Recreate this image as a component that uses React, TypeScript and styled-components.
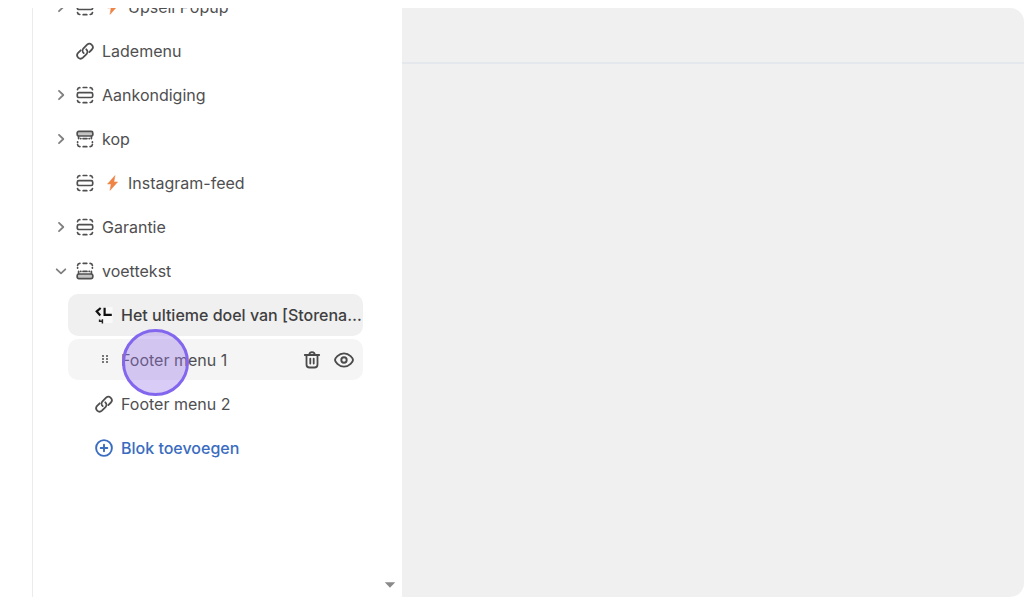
import React from 'react';
import styled, { createGlobalStyle } from 'styled-components';

const GlobalStyle = createGlobalStyle`
  * { box-sizing: border-box; }
  body {
    margin: 0;
    background: #fff;
    color: #4f4f51;
    font-family: Inter, "Liberation Sans", sans-serif;
  }
`;

const Editor = styled.div`
  display: flex;
  height: calc(100vh - 11px);
  margin: 8px 0 3px 32px;
  overflow: hidden;
  border-left: 1px solid #ebebeb;
  border-radius: 0 14px 14px 0;
`;

const Sidebar = styled.nav`
  display: flex;
  flex: 0 0 369px;
  min-width: 0;
  background: #fff;
`;

const SectionList = styled.ul`
  display: flex;
  flex: 1;
  flex-direction: column;
  gap: 3px;
  min-width: 0;
  margin: -22px 0 0;
  padding: 0 15px 0 16px;
  list-style: none;
`;

const BlockList = styled.ul`
  display: flex;
  flex-direction: column;
  gap: 3px;
  margin: 3px 0 0 19px;
  padding: 0;
  list-style: none;
`;

type Tone = 'plain' | 'selected' | 'hovered';
const fills: Record<Tone, string> = { plain: 'transparent', selected: '#f0f0f0', hovered: '#f5f5f5' };

const Row = styled.div<{ $tone?: Tone; $nested?: boolean }>`
  position: relative;
  display: flex;
  align-items: center;
  height: ${p => (p.$tone === 'selected' ? 42 : 41)}px;
  padding-left: ${p => (p.$nested ? 24 : 0)}px;
  border-radius: 10px;
  background: ${p => fills[p.$tone ?? 'plain']};
`;

const IconButton = styled.button`
  display: grid;
  flex: none;
  place-items: center;
  width: 24px;
  height: 24px;
  padding: 0;
  border: 0;
  background: none;
  color: #808080;
  cursor: pointer;
`;

const ToggleSpace = styled.span`
  flex: 0 0 24px;
`;

const RowButton = styled.button<{ $tone?: 'link' | 'strong' }>`
  display: flex;
  flex: 1;
  align-items: center;
  gap: 5px;
  min-width: 0;
  height: 40px;
  padding: 0;
  border: 0;
  background: none;
  color: ${p => (p.$tone === 'link' ? '#3a6cc0' : p.$tone === 'strong' ? '#3f3f41' : 'inherit')};
  font: 400 16px/24px Inter, "Liberation Sans", sans-serif;
  font-weight: ${p => (p.$tone ? 500 : 400)};
  text-align: left;
  cursor: pointer;
`;

const IconSlot = styled.span<{ $narrow?: boolean }>`
  display: grid;
  flex: 0 0 ${p => (p.$narrow ? 21 : 24)}px;
  place-items: center;
`;

const Label = styled.span`
  overflow: hidden;
  text-overflow: ellipsis;
  white-space: nowrap;
`;

const Actions = styled.div`
  display: flex;
  gap: 8px;
  padding-right: 7px;

  ${IconButton} {
    color: #4a4a4a;
  }
`;

const ClickMarker = styled.span`
  position: absolute;
  top: -10px;
  left: 54px;
  width: 67px;
  height: 67px;
  border: 3px solid #8366ee;
  border-radius: 50%;
  background: rgba(151, 113, 231, 0.36);
  pointer-events: none;
`;

const ScrollTrack = styled.div`
  display: flex;
  flex: 0 0 24px;
  align-items: flex-end;
  justify-content: center;
`;

const Preview = styled.main`
  flex: 1;
  min-width: 0;
  background: #f0f0f0;
`;

const PreviewBar = styled.header`
  height: 56px;
  border-bottom: 2px solid #e4e7eb;
`;

const Svg = styled.svg`
  display: block;
  fill: none;
  stroke: currentColor;
  stroke-linecap: round;
  stroke-linejoin: round;
`;

const SectionIcon = () => (
  <Svg width="20" height="20" viewBox="0 0 20 20" strokeWidth="1.7" aria-hidden="true">
    <rect x="2.3" y="7.7" width="15.4" height="4.8" rx="1.6" />
    <path d="M2.5 4.7c.2-1.2 1-1.9 2.3-2M8.2 2.5h3.6M15.2 2.7c1.3.1 2.1.8 2.3 2M2.5 15.5c.2 1.2 1 1.9 2.3 2M8.2 17.7h3.6M15.2 17.5c1.3-.1 2.1-.8 2.3-2" />
  </Svg>
);

const HeaderIcon = () => (
  <Svg width="20" height="20" viewBox="0 0 20 20" strokeWidth="1.7" aria-hidden="true">
    <rect x="2.2" y="2.4" width="15.6" height="4.6" rx="1.6" fill="#c4c4c4" />
    <path d="M3.6 7.6v2M16.4 7.6v2M8 9.6h4M5.6 9.6h.3M14.1 9.6h.3M2.6 12.9v.5M17.4 12.9v.5M2.6 15.6c.2 1.2 1 1.9 2.3 2M8.2 17.7h3.6M15.1 17.6c1.3-.1 2.1-.8 2.3-2" />
  </Svg>
);

const FooterIcon = () => (
  <Svg width="20" height="20" viewBox="0 0 20 20" strokeWidth="1.7" aria-hidden="true">
    <rect x="2.2" y="13" width="15.6" height="4.6" rx="1.6" fill="#c4c4c4" />
    <path d="M3.6 12.4v-2M16.4 12.4v-2M8 10.4h4M5.6 10.4h.3M14.1 10.4h.3M2.6 7.1v-.5M17.4 7.1v-.5M2.6 4.4c.2-1.2 1-1.9 2.3-2M8.2 2.3h3.6M15.1 2.4c1.3.1 2.1.8 2.3 2" />
  </Svg>
);

const LinkIcon = () => (
  <Svg width="20" height="20" viewBox="0 0 20 20" strokeWidth="1.8" aria-hidden="true">
    <path d="M8.7 12.1a3.4 3.4 0 0 1-.2-4.8l3.6-3.6a3.4 3.4 0 0 1 4.8 4.8l-2.6 2.6" />
    <path d="M11.3 8.3a3.4 3.4 0 0 1 .2 4.8l-3.6 3.6a3.4 3.4 0 0 1-4.8-4.8l2.6-2.6" />
  </Svg>
);

const ChevronIcon = ({ open }: { open?: boolean }) => (
  <Svg width="14" height="14" viewBox="0 0 14 14" strokeWidth="1.8" aria-hidden="true">
    <path d={open ? 'M2.7 5.3 7 9.3 11.3 5.3' : 'M5 2.8 9.3 7 5 11.2'} />
  </Svg>
);

const BoltIcon = () => (
  <svg width="11" height="16" viewBox="0 0 11 16" aria-hidden="true">
    <path d="M8 .6.5 9h3.6L3 15.4 10.6 6.9H6.9z" fill="#ee8546" stroke="#ee8546" strokeWidth=".5" />
  </svg>
);

const BrandIcon = () => (
  <svg width="20" height="20" viewBox="0 0 20 20" aria-hidden="true">
    <path d="M10 2h8.5v16H7v-5z" fill="#f9f9f9" />
    <path d="M6.7 3 2.7 6.4l3.6 4M10.6 2.8v7h7.2" fill="none" stroke="#111" strokeWidth="2.2" />
    <path d="M5.6 14.4v1.8h2.8M8.4 14.2v4.3" fill="none" stroke="#222" strokeWidth="1.5" />
  </svg>
);

const GripIcon = () => (
  <svg width="8" height="12" viewBox="0 0 8 12" fill="#777" aria-hidden="true">
    {[1, 4, 7].map(y => (
      <React.Fragment key={y}>
        <rect x="2" y={y} width="2" height="2" />
        <rect x="6" y={y} width="2" height="2" />
      </React.Fragment>
    ))}
  </svg>
);

const AddIcon = () => (
  <Svg width="20" height="20" viewBox="0 0 20 20" strokeWidth="1.9" aria-hidden="true">
    <circle cx="10" cy="10" r="7.9" />
    <path d="M10 6.7v6.6M6.7 10h6.6" />
  </Svg>
);

const TrashIcon = () => (
  <Svg width="20" height="20" viewBox="0 0 20 20" strokeWidth="1.8" aria-hidden="true">
    <path d="M2.8 5h14.4M7.3 4.8c0-3.6 5.4-3.6 5.4 0M4.5 5.3v9.2c0 2 1 3 3 3h5c2 0 3-1 3-3V5.3M8.3 8.6v5M11.7 8.6v5" />
  </Svg>
);

const EyeIcon = () => (
  <Svg width="22" height="20" viewBox="0 0 22 20" strokeWidth="1.9" aria-hidden="true">
    <path d="M2 10c0-1.4 3.4-6.6 9-6.6s9 5.2 9 6.6-3.4 6.6-9 6.6S2 11.4 2 10z" />
    <circle cx="11" cy="10" r="2.7" />
  </Svg>
);

const DownArrow = () => (
  <svg width="12" height="6" viewBox="0 0 12 6" aria-hidden="true">
    <path d="M.8.3h10.4L6 5.8z" fill="#8a8a8a" />
  </svg>
);

interface Section {
  name: string;
  icon: React.ReactNode;
  bolt?: boolean;
  toggle?: boolean;
  open?: boolean;
  children?: React.ReactNode;
}

const SectionItem = ({ name, icon, bolt, toggle, open, children }: Section) => (
  <li>
    <Row>
      {toggle ? (
        <IconButton aria-label={name} aria-expanded={!!open}>
          <ChevronIcon open={open} />
        </IconButton>
      ) : (
        <ToggleSpace />
      )}
      <RowButton>
        <IconSlot>{icon}</IconSlot>
        {bolt && <IconSlot $narrow><BoltIcon /></IconSlot>}
        <Label>{name}</Label>
      </RowButton>
    </Row>
    {children}
  </li>
);

export default function App() {
  return (
    <>
      <GlobalStyle />
      <Editor>
        <Sidebar>
          <SectionList>
            <SectionItem name="Upsell Popup" icon={<SectionIcon />} bolt toggle />
            <SectionItem name="Lademenu" icon={<LinkIcon />} />
            <SectionItem name="Aankondiging" icon={<SectionIcon />} toggle />
            <SectionItem name="kop" icon={<HeaderIcon />} toggle />
            <SectionItem name="Instagram-feed" icon={<SectionIcon />} bolt />
            <SectionItem name="Garantie" icon={<SectionIcon />} toggle />
            <SectionItem name="voettekst" icon={<FooterIcon />} toggle open>
              <BlockList>
                <li>
                  <Row $nested $tone="selected">
                    <RowButton $tone="strong">
                      <IconSlot><BrandIcon /></IconSlot>
                      <Label>Het ultieme doel van [Storename]</Label>
                    </RowButton>
                  </Row>
                </li>
                <li>
                  <Row $nested $tone="hovered">
                    <RowButton>
                      <IconSlot><GripIcon /></IconSlot>
                      <Label>Footer menu 1</Label>
                    </RowButton>
                    <Actions>
                      <IconButton aria-label="Verwijderen"><TrashIcon /></IconButton>
                      <IconButton aria-label="Verbergen"><EyeIcon /></IconButton>
                    </Actions>
                    <ClickMarker />
                  </Row>
                </li>
                <li>
                  <Row $nested>
                    <RowButton>
                      <IconSlot><LinkIcon /></IconSlot>
                      <Label>Footer menu 2</Label>
                    </RowButton>
                  </Row>
                </li>
                <li>
                  <Row $nested>
                    <RowButton $tone="link">
                      <IconSlot><AddIcon /></IconSlot>
                      <Label>Blok toevoegen</Label>
                    </RowButton>
                  </Row>
                </li>
              </BlockList>
            </SectionItem>
          </SectionList>
          <ScrollTrack>
            <IconButton aria-label="Omlaag scrollen"><DownArrow /></IconButton>
          </ScrollTrack>
        </Sidebar>
        <Preview>
          <PreviewBar />
        </Preview>
      </Editor>
    </>
  );
}
